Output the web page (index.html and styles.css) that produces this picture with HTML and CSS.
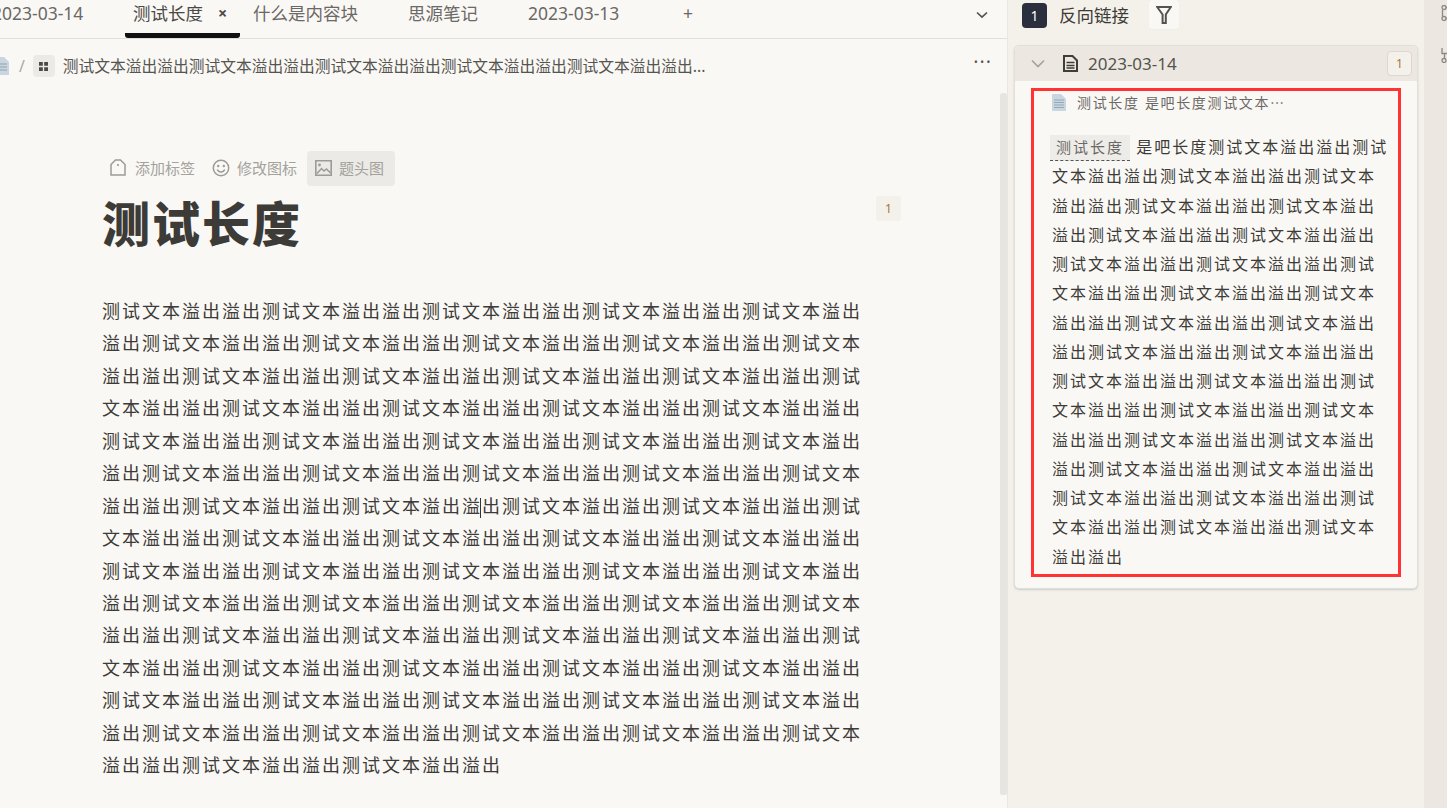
FILE: index.html
```html
<!DOCTYPE html>
<html lang="zh-CN">
<head>
<meta charset="utf-8">
<title>测试长度</title>
<link rel="stylesheet" href="styles.css">
</head>
<body>
<div class="app">
  <main class="main">
    <div class="tabbar">
      <div class="tab tab-first">2023-03-14</div>
      <div class="tab tab-active"><span>测试长度</span><span class="tab-close">×</span></div>
      <div class="tab tab-b">什么是内容块</div>
      <div class="tab tab-c">思源笔记</div>
      <div class="tab tab-d">2023-03-13</div>
      <div class="tab tab-plus">+</div>
      <svg class="tab-more" viewBox="0 0 12 8" width="12" height="8"><path d="M1 1.500 6 6.200 11 1.500" fill="none" stroke="#55534f" stroke-width="1.700"/></svg>
    </div>
    <div class="crumbs">
      <svg class="crumb-doc" viewBox="0 0 14 18" width="14" height="18"><path d="M0 0h9l5 5v13H0z" fill="#c9d6e0"/><path d="M2 7h10M2 10h10M2 13h10" stroke="#8fa3b3"/></svg>
      <span class="crumb-sep">/</span>
      <span class="crumb-grid"><svg viewBox="0 0 8 8" width="9" height="9"><path d="M0 0h3.400v3.400H0zM4.600 0H8v3.400H4.600zM0 4.600h3.400V8H0zM4.600 4.600H8V8H4.600z" fill="#4b4a47"/></svg></span>
      <span class="crumb-text">测试文本溢出溢出测试文本溢出溢出测试文本溢出溢出测试文本溢出溢出测试文本溢出溢出...</span>
      <span class="crumb-dots">•••</span>
    </div>
    <div class="editor">
      <div class="doc-actions">
        <span class="doc-action doc-tag"><svg viewBox="0 0 16 17" width="16" height="17"><path d="M1 5.500 5.500 1h5L15 5.500V16H1z" fill="none" stroke="#9c9b96" stroke-width="1.500"/><circle cx="8" cy="6" r="1.100" fill="#9c9b96"/></svg>添加标签</span>
        <span class="doc-action doc-icon"><svg viewBox="0 0 18 18" width="18" height="18"><circle cx="9" cy="9" r="7.700" fill="none" stroke="#9c9b96" stroke-width="1.500"/><circle cx="6.200" cy="7" r="1.200" fill="#9c9b96"/><circle cx="11.800" cy="7" r="1.200" fill="#9c9b96"/><path d="M5.300 10.500c1.500 3.400 5.900 3.400 7.400 0" fill="none" stroke="#9c9b96" stroke-width="1.500"/></svg>修改图标</span>
        <span class="doc-action doc-action-on"><svg viewBox="0 0 17 16" width="17" height="16"><path d="M.8.800h15.400v14.400H.800z" fill="none" stroke="#9c9b96" stroke-width="1.600"/><circle cx="4.500" cy="5" r="1.400" fill="#9c9b96"/><path d="M2 13.500 6.500 8.500l2.500 2.500 2.500-2 4 4" fill="none" stroke="#9c9b96" stroke-width="1.500"/></svg>题头图</span>
      </div>
      <div class="title-row">
        <h1 class="title">测试长度</h1>
        <span class="ref-count">1</span>
      </div>
      <p class="body-text">测试文本溢出溢出测试文本溢出溢出测试文本溢出溢出测试文本溢出溢出测试文本溢出溢出测试文本溢出溢出测试文本溢出溢出测试文本溢出溢出测试文本溢出溢出测试文本溢出溢出<!-- 10
-->测试文本溢出溢出测试文本溢出溢出测试文本溢出溢出测试文本溢出溢出测试文本溢出溢出测试文本溢出溢出测试文本溢出溢出测试文本溢出溢出测试文本溢出溢出测试文本溢出溢出<!-- 20
-->测试文本溢出溢出测试文本溢出溢出测试文本溢出溢出测试文本溢出溢出测试文本溢出溢出测试文本溢出溢出测试文本溢出溢出测试文本溢出溢出测试文本溢出溢出测试文本溢出溢出<!-- 30
-->测试文本溢出溢<span class="caret"></span>出<!-- 31
-->测试文本溢出溢出测试文本溢出溢出测试文本溢出溢出测试文本溢出溢出测试文本溢出溢出测试文本溢出溢出测试文本溢出溢出测试文本溢出溢出测试文本溢出溢出<!-- 40
-->测试文本溢出溢出测试文本溢出溢出测试文本溢出溢出测试文本溢出溢出测试文本溢出溢出测试文本溢出溢出测试文本溢出溢出测试文本溢出溢出测试文本溢出溢出测试文本溢出溢出<!-- 50
-->测试文本溢出溢出测试文本溢出溢出测试文本溢出溢出测试文本溢出溢出测试文本溢出溢出测试文本溢出溢出测试文本溢出溢出测试文本溢出溢出测试文本溢出溢出测试文本溢出溢出<!-- 60
-->测试文本溢出溢出测试文本溢出溢出测试文本溢出溢出测试文本溢出溢出测试文本溢出溢出测试文本溢出溢出测试文本溢出溢出测试文本溢出溢出测试文本溢出溢出</p>
      <div class="scrollbar"></div>
    </div>
  </main>
  <aside class="side">
    <div class="side-head">
      <span class="side-badge">1</span>
      <span class="side-title">反向链接</span>
      <span class="side-filter"><svg viewBox="0 0 16 18" width="16" height="18"><path d="M1.200 1h13.600L9.800 8.500V17H6.600V8.500z" fill="none" stroke="#55534f" stroke-width="2"/></svg></span>
    </div>
    <section class="card">
      <div class="card-head">
        <svg class="card-chev" viewBox="0 0 14 9" width="14" height="9"><path d="M1 1.500 7 7.500 13 1.500" fill="none" stroke="#a3a19c" stroke-width="1.600"/></svg>
        <svg class="card-doc" viewBox="0 0 15 17" width="15" height="17"><path d="M1 1h8.500L14 5.500V16H1z" fill="none" stroke="#3e3d3a" stroke-width="2"/><path d="M3.500 7.500h8M3.500 10.500h8M3.500 13h8" stroke="#3e3d3a" stroke-width="1.500"/></svg>
        <span class="card-name">2023-03-14</span>
        <span class="card-count">1</span>
      </div>
      <div class="card-body">
        <div class="highlight">
          <div class="crumb-line">
            <svg viewBox="0 0 14 17" width="14" height="17"><path d="M0 1a1 1 0 0 1 1-1h8l5 5v11a1 1 0 0 1-1 1H1a1 1 0 0 1-1-1z" fill="#c9d6e0"/><path d="M2 6h10M2 8.500h10M2 11h10M2 13.500h10" stroke="#93a7b7"/></svg>
            <span>测试长度 是吧长度测试文本⋯</span>
          </div>
          <p class="side-text"><span class="anchor">测试长度</span> 是吧长度测试文本溢出溢出测试文本溢出溢出测试文本溢出溢出测试文本溢出溢出测试文本溢出溢出测试文本溢出溢出测试文本溢出溢出测试文本溢出溢出测试文本溢出溢出<!-- 9
-->测试文本溢出溢出测试文本溢出溢出测试文本溢出溢出测试文本溢出溢出测试文本溢出溢出测试文本溢出溢出测试文本溢出溢出测试文本溢出溢出测试文本溢出溢出测试文本溢出溢出<!-- 19
-->测试文本溢出溢出测试文本溢出溢出测试文本溢出溢出测试文本溢出溢出测试文本溢出溢出测试文本溢出溢出测试文本溢出溢出测试文本溢出溢出测试文本溢出溢出测试文本溢出溢出<!-- 29
-->测试文本溢出溢出测试文本溢出溢出</p>
        </div>
      </div>
    </section>
  </aside>
  <div class="dock">
    <svg viewBox="0 0 6 16" width="6" height="16"><circle cx="3" cy="2.500" r="2" fill="none" stroke="#8a8883" stroke-width="1.300"/><circle cx="3" cy="13.500" r="2" fill="none" stroke="#8a8883" stroke-width="1.300"/><path d="M1.500 4.500v7M5 2.500h2M5 13.500h2" stroke="#8a8883" stroke-width="1.300"/></svg>
    <svg viewBox="0 0 6 16" width="6" height="16"><circle cx="3" cy="13.500" r="2" fill="none" stroke="#8a8883" stroke-width="1.300"/><path d="M1 1v5.500h6M3.500 6.500v5" fill="none" stroke="#8a8883" stroke-width="1.300"/></svg>
  </div>
</div>
</body>
</html>
```
FILE: styles.css
```css
* { box-sizing: border-box; }
html, body { margin: 0; height: 100%; overflow: hidden; }
body {
  font-family: "Noto Sans", "Noto Sans CJK SC", sans-serif;
  background: #faf8f5;
  color: #3c3b37;
}
.app { display: flex; width: 1447px; height: 808px; overflow: hidden; }
.main { width: 1008px; flex: none; display: flex; flex-direction: column; border-right: 1px solid #e9e7e2; }

.tabbar { position: relative; display: flex; height: 39px; border-bottom: 1px solid #dfe0e1; font-size: 17.500px; color: #6a6965; flex: none; }
.tab { height: 38px; line-height: 27px; white-space: nowrap; flex: none; }
.tab-first { width: 133px; margin-left: -8px; }
.tab-active { width: 115px; display: flex; gap: 15px; padding-left: 8px; color: #4a4945; border-bottom: 5px solid #111; border-radius: 0 0 3px 3px; }
.tab-close { font-size: 16px; font-weight: 700; }
.tab-b { margin-left: 13px; width: 155px; }
.tab-c { width: 120px; }
.tab-d { width: 155px; }
.tab-more { position: absolute; left: 976px; top: 11px; }

.crumbs { display: flex; align-items: center; height: 54px; flex: none; position: relative; font-size: 15.750px; color: #55544f; }
.crumb-doc { margin-left: -5px; flex: none; }
.crumb-sep { margin-left: 10px; color: #a9a8a3; }
.crumb-grid { display: flex; align-items: center; justify-content: center; width: 22px; height: 22px; margin-left: 8px; background: #eceae6; border-radius: 4px; }
.crumb-text { margin-left: 8px; margin-bottom: 2px; white-space: nowrap; }
.crumb-dots { position: absolute; left: 974px; top: 16px; font-size: 10px; letter-spacing: 2.500px; color: #55534f; }

.editor { position: relative; flex: 1; padding: 58px 0 0 102px; }
.doc-actions { display: flex; align-items: center; font-size: 15px; color: #a3a29c; height: 35px; }
.doc-action { display: inline-flex; align-items: center; height: 35px; padding-bottom: 2px; }
.doc-tag { gap: 9px; padding-left: 8px; width: 101px; }
.doc-icon { gap: 7px; padding-left: 9px; width: 104px; }
.doc-action-on { gap: 7px; padding-left: 8px; width: 88px; background: #ebeae6; border-radius: 4px; }
.title-row { position: relative; width: 800px; margin-top: 8px; }
.title { margin: 0; font-size: 48px; line-height: 60px; letter-spacing: 2px; font-weight: 800; color: #3c3b37; }
.ref-count { position: absolute; left: 774px; top: 2px; width: 25px; height: 25px; text-align: center; line-height: 25px; font-size: 12px; background: #f4f1ea; color: #a07a3c; border-radius: 3px; }
.body-text { margin: 41px 0 0; width: 761px; font-size: 18px; line-height: 32.440px; letter-spacing: 2px; color: #3c3b37; word-break: break-all; }
.caret { position: relative; display: inline-block; width: 0; }
.caret::after { content: ""; position: absolute; left: -2px; top: -15px; width: 1px; height: 20px; background: #333; }
.scrollbar { position: absolute; left: 1000px; top: 0; width: 7px; height: 702px; background: #e6e5e0; border-radius: 3px 3px 2px 2px; }

.side { width: 416px; flex: none; background: #f4f1ea; padding: 0 6px; }
.side-head { display: flex; align-items: center; height: 29px; padding-left: 8px; position: relative; }
.side-badge { width: 25px; height: 25px; border-radius: 4px; background: #2a2e3d; color: #fff; font-size: 14px; line-height: 25px; text-align: center; margin-top: 1px; }
.side-title { margin-left: 12px; font-size: 17.500px; color: #3c3b37; }
.side-filter { display: flex; align-items: center; justify-content: center; width: 30px; height: 29px; margin-left: 20px; background: #faf8f5; border-radius: 3px; box-shadow: 0 0 1px #ddd; }
.card { margin-top: 16px; width: 404px; background: #faf8f5; border: 1px solid #e2dfd9; border-radius: 5px; box-shadow: 0 1px 2px #ccc; overflow: hidden; }
.card-head { display: flex; align-items: center; height: 35px; background: #ece8e1; position: relative; padding-left: 16px; }
.card-doc { margin-left: 18px; }
.card-name { margin-left: 10px; font-size: 17px; color: #55534f; }
.card-count { position: absolute; right: 5px; top: 5px; width: 25px; height: 25px; line-height: 23px; text-align: center; font-size: 12px; color: #a07a3c; background: #f4f1ea; border: 1px solid #dcd8d0; border-radius: 4px; }
.card-body { padding: 7px 17px 11px 16px; }
.highlight { width: 370px; height: 489px; border: 3px solid #ff3333; padding: 0 0 0 18px; }
.crumb-line { display: flex; align-items: center; gap: 11px; font-size: 14px; letter-spacing: 1.650px; color: #6a6965; height: 22px; }
.side-text { margin: 20px 0 0; padding-right: 7px; font-size: 16px; line-height: 29.250px; letter-spacing: 2px; color: #3c3b37; word-break: break-all; }
.anchor { background: #eeece8; color: #6a6965; border-bottom: 1px dashed #555; padding: 2px 6px 3px 6px; margin-left: -2px; font-size: 15px; }
.dock { width: 23px; flex: none; background: #ece8e1; display: flex; flex-direction: column; align-items: flex-end; gap: 26px; padding-top: 5px; overflow: hidden; }
```
